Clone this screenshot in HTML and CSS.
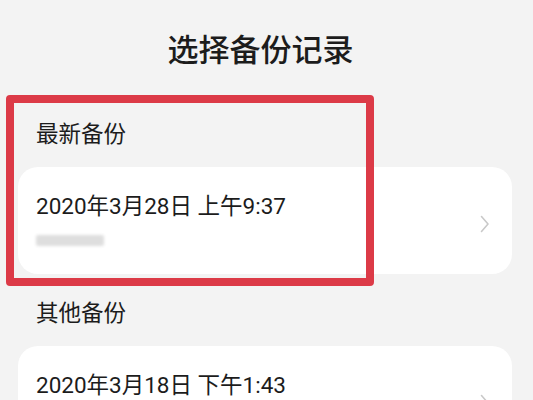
FILE: index.html
```html
<!DOCTYPE html>
<html lang="zh-CN">
<head>
    <meta charset="UTF-8">
    <meta name="viewport" content="width=device-width, initial-scale=1.0">
    <title>选择备份记录</title>
    <link rel="stylesheet" href="styles.css">
</head>
<body>
    <div class="page">
        <h1 class="title">选择备份记录</h1>

        <div class="group">
            <div class="group-label">最新备份</div>
            <div class="record">
                <div class="record-info">
                    <div class="record-date">2020年3月28日 上午9:37</div>
                    <div class="record-device"></div>
                </div>
                <svg class="chevron" width="10" height="18" viewBox="0 0 10 18">
                    <path d="M1.5 1.5 L8 9 L1.5 16.5" fill="none" stroke="#c9c9c9" stroke-width="1.6" stroke-linecap="round" stroke-linejoin="round"/>
                </svg>
            </div>
            <!-- highlight frame around the newest backup -->
            <div class="highlight"></div>
        </div>

        <div class="group">
            <div class="group-label">其他备份</div>
            <div class="record">
                <div class="record-info">
                    <div class="record-date">2020年3月18日 下午1:43</div>
                    <div class="record-device"></div>
                </div>
                <svg class="chevron" width="10" height="18" viewBox="0 0 10 18">
                    <path d="M1.5 1.5 L8 9 L1.5 16.5" fill="none" stroke="#c9c9c9" stroke-width="1.6" stroke-linecap="round" stroke-linejoin="round"/>
                </svg>
            </div>
        </div>
    </div>
</body>
</html>
```

FILE: styles.css
```css
body {
    margin: 0;
    background: #f3f3f3;
    font-family: Roboto, "Noto Sans CJK SC", sans-serif;
    color: #1c1c1c;
    overflow: hidden;
}
.page {
    padding: 29px 21px 0 18px;
}
.title {
    margin: 0;
    font-size: 31px;
    font-weight: 500;
    line-height: 44px;
    text-align: center;
    padding-right: 9px;
}
.group {
    position: relative;
}
.group:first-of-type {
    margin-top: 46px;
}
.group-label {
    font-size: 22.5px;
    line-height: 30px;
    padding: 0 0 0 18px;
    margin: 24px 0 18px;
}
.record {
    background: #ffffff;
    border-radius: 20px;
    display: flex;
    align-items: center;
    padding: 22px 22px 22px 18px;
    height: 63px;
}
.record-info {
    flex: 1;
}
.record-date {
    font-size: 22.5px;
    line-height: 30px;
    margin-top: -5px;
}
.record-device {
    width: 68px;
    height: 11px;
    margin-top: 14px;
    background: #dedede;
    border-radius: 2px;
    filter: blur(1.5px);
}
.chevron {
    margin-top: 6px;
}
.highlight {
    position: absolute;
    left: -12px;
    top: -24px;
    width: 352px;
    height: 175px;
    border: 8px solid #dc3a47;
    border-radius: 4px;
}
```
